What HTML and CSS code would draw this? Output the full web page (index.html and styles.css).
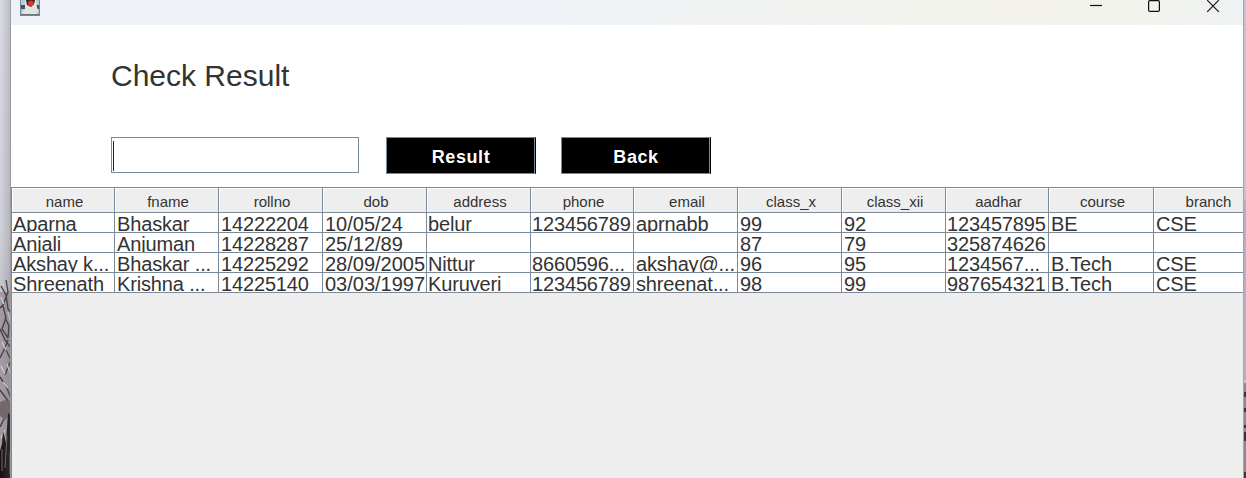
FILE: index.html
```html
<!DOCTYPE html>
<html lang="en">
<head>
<meta charset="utf-8">
<title>Check Result</title>
<link rel="stylesheet" href="styles.css">
</head>
<body>
<div class="desktop">
  <svg class="edge-left" width="11" height="478" viewBox="0 0 11 478">
    <defs>
      <linearGradient id="sky" x1="0" y1="0" x2="0" y2="1"><stop offset="0" stop-color="#dcdce6"/><stop offset=".5" stop-color="#d0d0da"/><stop offset="1" stop-color="#a69da4"/></linearGradient>
      <linearGradient id="shade"><stop offset="0" stop-color="#777" stop-opacity="0"/><stop offset="1" stop-color="#666" stop-opacity=".3"/></linearGradient>
    </defs>
    <rect width="11" height="478" fill="url(#sky)"/>
    <path d="M0 292h11v186H0z" fill="#a49ca5"/>
    <g fill="none" stroke="#433c42" stroke-width="1.4">
      <path d="M1 286l5 9 2 14 3 4M6 280l2 12-5 13-3 3M3 306l3 12-4 11 6 9M5 318l4 8-1 12M0 329l5 11 6 8M8 340l-5 12-3 6M6 350l5 10-6 15M0 377l6 9 5 12M0 390l11 15M8 405l-4 14-4 8"/>
    </g>
    <g fill="none" stroke="#ded9e0" stroke-width="1.2"><path d="M1 297l3 7M8 312l2 9M2 342l4 8M7 364l3 9M1 366l4 8M3 382l5 6M1 438l4-8"/></g>
    <path d="M0 402l5-2 6 2v12l-6 6-5-4z" fill="#75676c"/>
    <path d="M8 413l3 2v63H0v-27l2-7 1-13 3 12z" fill="#171012"/>
    <path d="M2 449v22M7 436l-2 32M10 452v22" stroke="#796265" fill="none"/>
    <rect width="11" height="478" fill="url(#shade)"/>
    <path d="M10.5 0v478" stroke="#9b9da3"/>
  </svg>
  <main class="window">
    <header class="titlebar">
      <svg class="app-icon" width="20" height="16" viewBox="0 0 20 16">
        <path d="M0 0h20v16H0z" fill="#6e8797"/>
        <path d="M1 0h18v15H1z" fill="#b9cbd4"/>
        <path d="M1 5h5v4H1zM14 5h5v4h-5z" fill="#46545d"/>
        <path d="M5 0h11l1 7 1 4-2 3H4l-2-2 3-3z" fill="#e4e3e0"/>
        <path d="M6 0h9l-1 4-3 3-4-2z" fill="#302629"/>
        <circle cx="10.8" cy="3.2" r="2.7" fill="#ee3029"/>
        <path d="M1 14.500h18" stroke="#66747d"/>
      </svg>
      <svg class="controls" width="131" height="14" viewBox="0 0 131 14" fill="none" stroke="#111" stroke-width="1.2">
        <path d="M0 5.500h12"/>
        <rect x="58.6" y=".6" width="10.8" height="10.8" rx="1.2"/>
        <path d="M117.2.2l11.600 11.600M128.8.2L117.2 11.800"/>
      </svg>
    </header>
    <h1 class="title">Check Result</h1>
    <div class="search">
      <div class="field"><span class="caret"></span></div>
      <button class="btn">Result</button>
      <button class="btn">Back</button>
    </div>
    <section class="grid">
      <div class="row head"><div>name</div><div>fname</div><div>rollno</div><div>dob</div><div>address</div><div>phone</div><div>email</div><div>class_x</div><div>class_xii</div><div>aadhar</div><div>course</div><div>branch</div></div>
      <div class="row"><div>Aparna</div><div>Bhaskar</div><div>14222204</div><div class="wide">10/05/24</div><div>belur</div><div>123456789</div><div>aprnabb</div><div>99</div><div>92</div><div>123457895</div><div>BE</div><div>CSE</div></div>
      <div class="row"><div>Anjali</div><div>Anjuman</div><div>14228287</div><div class="wide">25/12/89</div><div></div><div></div><div></div><div>87</div><div>79</div><div>325874626</div><div></div><div></div></div>
      <div class="row"><div>Akshay k...</div><div>Bhaskar ...</div><div>14225292</div><div class="wide">28/09/2005</div><div>Nittur</div><div>8660596...</div><div>akshay@...</div><div>96</div><div>95</div><div>1234567...</div><div class="wide">B.Tech</div><div>CSE</div></div>
      <div class="row"><div>Shreenath</div><div>Krishna ...</div><div>14225140</div><div class="wide">03/03/1997</div><div>Kuruveri</div><div>123456789</div><div>shreenat...</div><div>98</div><div>99</div><div>987654321</div><div class="wide">B.Tech</div><div>CSE</div></div>
    </section>
  </main>
  <svg class="edge-right" width="3" height="478" viewBox="0 0 3 478">
    <path d="M0 0h3v478H0z" fill="#c3c3d2"/>
    <path d="M0 200h3v180H0z" fill="#b1b1c0"/>
    <path d="M0 383h3v95H0z" fill="#8f8891"/>
    <path d="M1 392h2v5H1zM1 408h2v4H1zM1 425h2v3H1zM1 432h2v9H1zM1 472h2v6H1z" fill="#3c3439"/>
    <path d="M.5 0v478" stroke="#a3a5ae"/>
  </svg>
</div>
</body>
</html>
```
FILE: styles.css
```css
body {
  margin: 0;
  overflow: hidden;
  font-family: "Liberation Sans", Arial, sans-serif;
  color: #333;
}

.desktop {
  display: flex;
  width: 1246px;
  height: 478px;
}

.edge-left,
.edge-right {
  display: block;
  flex: none;
}

.window {
  display: flex;
  flex-direction: column;
  width: 1232px;
  height: 478px;
  overflow: hidden;
  background: #fff;
}

.titlebar {
  display: flex;
  flex: none;
  justify-content: space-between;
  box-sizing: border-box;
  height: 25px;
  padding: 0 22px 0 9px;
  background: linear-gradient(90deg, #eef2f8, #eff2f6 45%, #f3f2eb 82%, #f2f2ee 92%, #eff2f3);
}

.title {
  height: 36px;
  margin: 33px 0 0 100px;
  font-size: 30px;
  font-weight: 400;
  line-height: 36px;
}

.search {
  display: flex;
  height: 37px;
  margin: 43px 0 13px 100px;
}

.field {
  box-sizing: border-box;
  width: 248px;
  height: 36px;
  margin-right: 27px;
  padding: 3px 1px;
  border: 1px solid #7a8a99;
}

.caret {
  display: block;
  width: 1px;
  height: 30px;
  background: #222;
}

.btn {
  box-sizing: border-box;
  width: 150px;
  height: 37px;
  margin-right: 25px;
  padding: 3px 0 0;
  border: 1px solid #7a8a99;
  border-right-color: #000;
  background: #000;
  box-shadow: inset -1px 0 #7a8a99;
  color: #fff;
  font: bold 18px "Liberation Sans", Arial, sans-serif;
  letter-spacing: 0.6px;
}

.grid {
  flex: 1;
  overflow: hidden;
  border-top: 1px solid #7a8a99;
  border-left: 1px solid #7a8a99;
  background: #eee;
}

.row {
  display: grid;
  grid-template-columns: 103px 104px 104px 104px 104px 103px 104px 104px 104px 103px 105px 107px;
  width: 1249px;
  height: 20px;
  background: #fff;
}

.row > div {
  box-sizing: border-box;
  height: 20px;
  padding-left: 2px;
  overflow: hidden;
  border-right: 1px solid #7a8a99;
  border-bottom: 1px solid #7a8a99;
  font-size: 20px;
  letter-spacing: -0.15px;
  line-height: 22px;
  white-space: pre;
}

.row > .wide {
  letter-spacing: 0;
}

.row > div:first-child,
.row > div:nth-child(5),
.row > div:nth-child(6),
.row > div:nth-child(10) {
  padding-left: 1px;
}

.head,
.head > div {
  height: 25px;
}

.row.head > div {
  padding: 0 0 0 3px;
  background: #eee;
  box-shadow: inset 1px 1px #fff;
  font-size: 15px;
  letter-spacing: 0;
  line-height: 27px;
  text-align: center;
}
```
